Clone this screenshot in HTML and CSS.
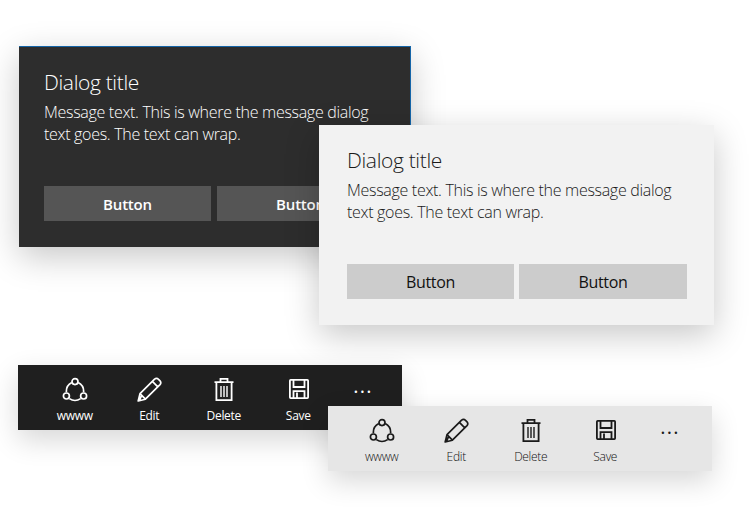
FILE: index.html
```html
<!DOCTYPE html>
<html lang="en">
<head>
<meta charset="utf-8">
<title>Dialogs and command bars</title>
<link rel="stylesheet" href="styles.css">
</head>
<body>
<svg class="defs" width="0" height="0" aria-hidden="true">
  <symbol id="i-share" viewBox="0 0 26 26">
    <path d="M9.8 6.6A10 10 0 0 0 4.4 16.2M21.6 16.2A10 10 0 0 0 16.2 6.6M7.4 22.6A10 10 0 0 0 18.6 22.6" fill="none" stroke="currentColor" stroke-width="1.7"/>
    <circle cx="13" cy="5.6" r="3" fill="none" stroke="currentColor" stroke-width="1.7"/>
    <circle cx="4.4" cy="20" r="3" fill="none" stroke="currentColor" stroke-width="1.7"/>
    <circle cx="21.6" cy="20" r="3" fill="none" stroke="currentColor" stroke-width="1.7"/>
  </symbol>
  <symbol id="i-edit" viewBox="0 0 26 26">
    <path d="M2.2 25 4 17.6 18.6 3.2Q20.6 1.6 22.8 3.6L24 4.8Q25.6 6.8 24 8.6L9.4 23.2ZM4 17.6 9.4 23.2M16.4 5.4 21.8 10.8M5.6 19.6 3.6 24" fill="none" stroke="currentColor" stroke-width="1.7" stroke-linejoin="round"/>
  </symbol>
  <symbol id="i-delete" viewBox="0 0 26 26">
    <path d="M5.4 6.5V24.1H20.6V6.5M3.5 6.2H22.5M9.5 6V2.9H16.5V6" fill="none" stroke="currentColor" stroke-width="1.8"/>
    <path d="M10 10V21M13 10V21M16 10V21" fill="none" stroke="currentColor" stroke-width="1.4"/>
  </symbol>
  <symbol id="i-save" viewBox="0 0 26 26">
    <path d="M5.7 3.9H22.3Q23.1 3.9 23.1 4.8V21.2Q23.1 22.1 22.3 22.1H5.7Q4.9 22.1 4.9 21.2V4.8Q4.9 3.9 5.7 3.9ZM8.5 4.2V11H19.5V4.2M8.5 21.8V15.2H19.5V21.8M12 16.6V21.5" fill="none" stroke="currentColor" stroke-width="1.8"/>
  </symbol>
</svg>

<section class="dialog dialog-dark">
  <h2 class="dialog-title">Dialog title</h2>
  <p class="dialog-text">Message text. This is where the message dialog text goes. The text can wrap.</p>
  <div class="dialog-actions">
    <button class="dialog-button">Button</button>
    <button class="dialog-button">Button</button>
  </div>
</section>

<section class="dialog dialog-light">
  <h2 class="dialog-title">Dialog title</h2>
  <p class="dialog-text">Message text. This is where the message dialog text goes. The text can wrap.</p>
  <div class="dialog-actions">
    <button class="dialog-button">Button</button>
    <button class="dialog-button">Button</button>
  </div>
</section>

<nav class="bar bar-dark">
  <div class="bar-item"><svg class="bar-icon"><use href="#i-share"/></svg><span class="bar-label">wwww</span></div>
  <div class="bar-item"><svg class="bar-icon"><use href="#i-edit"/></svg><span class="bar-label">Edit</span></div>
  <div class="bar-item"><svg class="bar-icon"><use href="#i-delete"/></svg><span class="bar-label">Delete</span></div>
  <div class="bar-item"><svg class="bar-icon"><use href="#i-save"/></svg><span class="bar-label">Save</span></div>
  <div class="bar-more">···</div>
</nav>

<nav class="bar bar-light">
  <div class="bar-item"><svg class="bar-icon"><use href="#i-share"/></svg><span class="bar-label">wwww</span></div>
  <div class="bar-item"><svg class="bar-icon"><use href="#i-edit"/></svg><span class="bar-label">Edit</span></div>
  <div class="bar-item"><svg class="bar-icon"><use href="#i-delete"/></svg><span class="bar-label">Delete</span></div>
  <div class="bar-item"><svg class="bar-icon"><use href="#i-save"/></svg><span class="bar-label">Save</span></div>
  <div class="bar-more">···</div>
</nav>
</body>
</html>
```
FILE: styles.css
```css
* { box-sizing: border-box; }
html, body { margin: 0; height: 100%; background: #fff; overflow: hidden; }
body { position: relative; width: 750px; height: 520px; font-family: "Open Sans", "Noto Sans", sans-serif; }
.defs { position: absolute; }

.dialog {
  position: absolute;
  display: flex;
  flex-direction: column;
  height: 200px;
  box-shadow: 0 10px 32px rgba(0, 0, 0, 0.22);
}
.dialog-dark {
  left: 19px; top: 46px; width: 392px; height: 201px;
  padding: 21px 27px 26px 25px;
  background: #2d2d2d; color: #fff;
  border-top: 1px solid #1565a8;
  border-right: 1px solid #1565a8;
}
.dialog-light {
  left: 319px; top: 125px; width: 395px;
  padding: 21px 27px 26px 28px;
  background: #f2f2f2; color: #1a1a1a;
}
.dialog-title { margin: 0; font-size: 21px; line-height: 28px; font-weight: 300; letter-spacing: -0.35px; }
.dialog-text { margin: 5px 0 0; font-size: 16px; line-height: 22px; font-weight: 300; letter-spacing: -0.3px; }
.dialog-actions { display: grid; grid-template-columns: 167px 168px; gap: 5px; margin-top: auto; }
.dialog-dark .dialog-actions { gap: 6px; grid-template-columns: 167px 167px; }
.dialog-button {
  height: 35px;
  padding: 2px 0 0;
  border: 0;
  font: 400 16px/33px "Open Sans", "Noto Sans", sans-serif;
  letter-spacing: -0.3px;
}
.dialog-dark .dialog-button { background: #555; color: #fff; font-size: 15px; font-weight: 600; letter-spacing: -0.2px; }
.dialog-light .dialog-button { background: #ccc; color: #111; }

.bar {
  position: absolute;
  display: flex;
  width: 384px;
  height: 65px;
  padding-top: 11px;
  box-shadow: 0 10px 28px rgba(0, 0, 0, 0.16);
}
.bar-dark { left: 18px; top: 365px; padding-left: 19.5px; background: #1f1f1f; color: #fff; }
.bar-light { left: 328px; top: 406px; padding-left: 16.5px; background: #e6e6e6; color: #1a1a1a; }
.bar-item { display: flex; flex-direction: column; align-items: center; width: 74.5px; }
.bar-icon { width: 26px; height: 26px; }
.bar-label { margin-top: 4px; font-size: 12px; line-height: 20px; letter-spacing: -0.3px; font-weight: 400; }
.bar-light .bar-label { font-weight: 300; color: #111; }
.bar-more { width: 54px; padding-top: 3px; padding-left: 1px; text-align: center; font-size: 20px; line-height: 26px; letter-spacing: 1.2px; }
```
